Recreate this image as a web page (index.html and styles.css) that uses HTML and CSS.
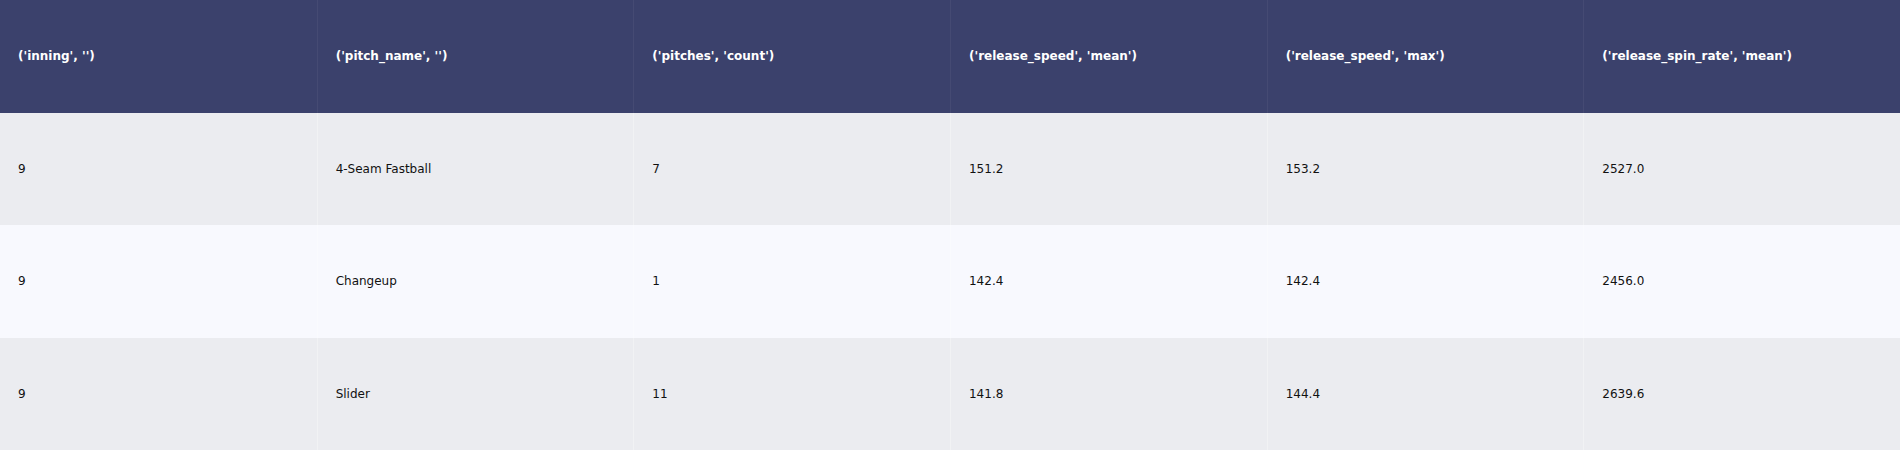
FILE: index.html
```html
<!DOCTYPE html>
<html>
<head>
<meta charset="utf-8">
<link rel="stylesheet" href="styles.css">
</head>
<body>
<div class="table">
  <div class="cell head">('inning', '')</div>
  <div class="cell head">('pitch_name', '')</div>
  <div class="cell head">('pitches', 'count')</div>
  <div class="cell head">('release_speed', 'mean')</div>
  <div class="cell head">('release_speed', 'max')</div>
  <div class="cell head">('release_spin_rate', 'mean')</div>

  <div class="cell even">9</div>
  <div class="cell even">4-Seam Fastball</div>
  <div class="cell even">7</div>
  <div class="cell even">151.2</div>
  <div class="cell even">153.2</div>
  <div class="cell even">2527.0</div>

  <div class="cell odd">9</div>
  <div class="cell odd">Changeup</div>
  <div class="cell odd">1</div>
  <div class="cell odd">142.4</div>
  <div class="cell odd">142.4</div>
  <div class="cell odd">2456.0</div>

  <div class="cell even">9</div>
  <div class="cell even">Slider</div>
  <div class="cell even">11</div>
  <div class="cell even">141.8</div>
  <div class="cell even">144.4</div>
  <div class="cell even">2639.6</div>
</div>
</body>
</html>
```
FILE: styles.css
```css
html, body {
  margin: 0;
  padding: 0;
  background: #ffffff;
}
.table {
  width: 1900px;
  height: 450px;
  display: grid;
  grid-template-columns: repeat(6, 1fr);
  grid-template-rows: repeat(4, 1fr);
  font-family: "DejaVu Sans", Verdana, sans-serif;
  font-size: 12px;
}
.cell {
  display: flex;
  align-items: center;
  padding-left: 18px;
  box-sizing: border-box;
  border-left: 1px solid rgba(255, 255, 255, 0.3);
  color: #111111;
  white-space: nowrap;
}
.cell:nth-child(6n+1) {
  border-left: none;
}
.head {
  background: #3b416c;
  color: #ffffff;
  font-weight: bold;
  border-left-color: rgba(255, 255, 255, 0.05);
}
.even {
  background: #ebecf0;
}
.odd {
  background: #f8f9fe;
}
```
